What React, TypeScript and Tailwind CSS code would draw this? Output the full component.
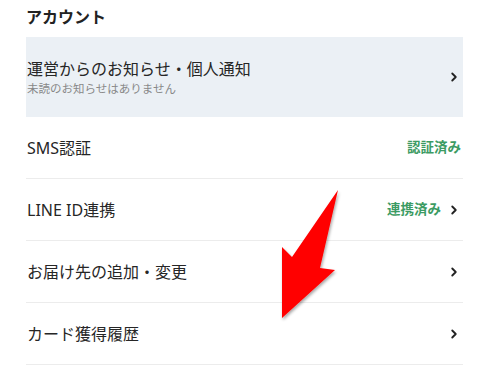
import { ChevronRight } from 'lucide-react';

const font = { fontFamily: '"Noto Sans", "Noto Sans CJK JP", sans-serif' };

interface RowProps {
  label: string;
  status?: string;
  chevron?: boolean;
}

function Chevron() {
  return <ChevronRight className="w-[14px] h-[14px] text-[#222]" strokeWidth={3.2} />;
}

function Row({ label, status, chevron = true }: RowProps) {
  return (
    <div className="h-[62px] flex items-center justify-between border-b border-[#ececec] pr-[2px]">
      <span className="text-[16px] text-[#262626] pl-[1px]">{label}</span>
      <div className="flex items-center gap-[6px]">
        {status && <span className="text-[13.5px] font-bold text-[#3c9b63]">{status}</span>}
        {chevron && <Chevron />}
      </div>
    </div>
  );
}

export default function App() {
  return (
    <div className="relative w-[489px] h-[379px] bg-white overflow-hidden" style={font}>
      <div className="px-[26px] pt-[5px]">
        <h2 className="text-[16px] font-bold text-[#222] h-[32px] leading-[24px]">アカウント</h2>

        {/* お知らせ */}
        <div className="h-[80px] bg-[#ebf0f5] flex items-center justify-between pr-[2px]">
          <div className="flex flex-col pt-[1px] pl-[1px]">
            <span className="text-[16px] text-[#262626] leading-[21px]">運営からのお知らせ・個人通知</span>
            <span className="text-[11.5px] text-[#888] leading-[17px]">未読のお知らせはありません</span>
          </div>
          <Chevron />
        </div>

        <Row label="SMS認証" status="認証済み" chevron={false} />
        <Row label="LINE ID連携" status="連携済み" />
        <Row label="お届け先の追加・変更" />
        <Row label="カード獲得履歴" />
      </div>

      {/* annotation arrow */}
      <svg className="absolute left-0 top-0 pointer-events-none" width="489" height="379">
        <defs>
          <filter id="sh" x="-20%" y="-20%" width="140%" height="140%">
            <feDropShadow dx="1" dy="2" stdDeviation="1.5" floodColor="#000" floodOpacity="0.35" />
          </filter>
        </defs>
        <polygon
          points="338,190 320,268 335,270 282,318 282,247 292,257"
          fill="#ff0000"
          filter="url(#sh)"
        />
      </svg>
    </div>
  );
}
